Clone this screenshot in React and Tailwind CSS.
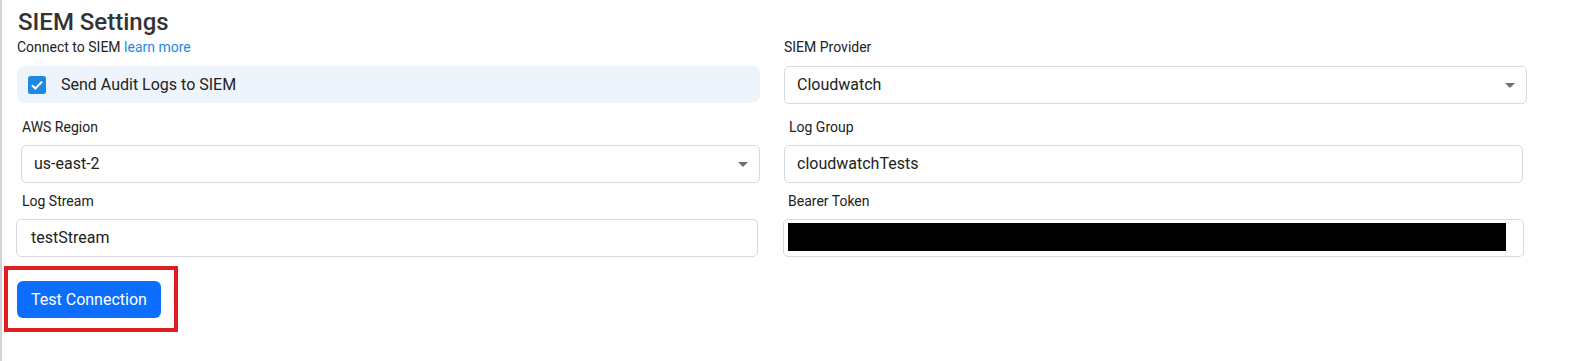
import { useState } from "react";

const FIELD_LABEL = "text-[14px] leading-5 text-[#222]";
const BOX = "h-[38px] rounded-[5px] border border-[#d6d9df] bg-white flex items-center text-[16px] text-[#222]";

function SelectBox({ value, className = "" }) {
    return (
        <div className={`${BOX} justify-between pl-3 pr-[11px] ${className}`}>
            <span>{value}</span>
            <span className="w-0 h-0 border-l-[5px] border-r-[5px] border-t-[5px] border-l-transparent border-r-transparent border-t-[#707070]" />
        </div>
    );
}

function CheckIcon() {
    return (
        <svg width="18" height="18" viewBox="0 0 18 18" className="shrink-0">
            <rect x="0" y="0" width="18" height="18" rx="2.5" fill="#1e88e5" />
            <path d="M4 9.2 L7.4 12.5 L14 5.8" fill="none" stroke="#fff" strokeWidth="2" />
        </svg>
    );
}

export default function App() {
    const [checked] = useState(true);

    return (
        <div className="min-h-[361px] h-screen bg-white border-l-2 border-[#d3d3d3] font-['Roboto',sans-serif]">
            <div className="pl-[15px] pt-2">
                {/* Header */}
                <h1 className="text-[24px] leading-[28px] font-medium text-[#333] pl-px">SIEM Settings</h1>

                <div className="grid grid-cols-[743px_743px] gap-x-6 mt-px">
                    {/* Row 1 */}
                    <div>
                        <p className={`${FIELD_LABEL} mb-[9px]`}>
                            Connect to SIEM <a href="#" className="text-[#1e88e5]">learn more</a>
                        </p>
                        <div className="h-[37px] rounded-lg bg-[#edf4fc] flex items-center gap-[15px] pl-[11px]">
                            {checked && <CheckIcon />}
                            <span className="text-[16px] text-[#222]">Send Audit Logs to SIEM</span>
                        </div>
                    </div>
                    <div>
                        <p className={`${FIELD_LABEL} mb-[9px]`}>SIEM Provider</p>
                        <SelectBox value="Cloudwatch" className="h-[37px]" />
                    </div>

                    {/* Row 2 */}
                    <div className="mt-[13px] ml-1">
                        <p className={`${FIELD_LABEL} mb-2 pl-px`}>AWS Region</p>
                        <SelectBox value="us-east-2" />
                    </div>
                    <div className="mt-[13px]">
                        <p className={`${FIELD_LABEL} mb-2 pl-[5px]`}>Log Group</p>
                        <div className={`${BOX} pl-3 w-[739px]`}>cloudwatchTests</div>
                    </div>

                    {/* Row 3 */}
                    <div className="mt-2 -ml-px">
                        <p className={`${FIELD_LABEL} mb-2 pl-[6px]`}>Log Stream</p>
                        <div className={`${BOX} pl-[14px] w-[742px]`}>testStream</div>
                    </div>
                    <div className="mt-2 -ml-px">
                        <p className={`${FIELD_LABEL} mb-2 pl-[5px]`}>Bearer Token</p>
                        <div className={`${BOX} w-[741px] pl-1 pr-[17px] items-start pt-[3px]`}>
                            <div className="h-[28px] w-full bg-black" />
                        </div>
                    </div>
                </div>

                {/* Test connection (highlighted) */}
                <div className="mt-[9px] -ml-[13px] w-[174px] border-4 border-[#e11d24] pl-[9px] pt-[11px] pb-[10px]">
                    <button className="h-[37px] px-[14px] rounded-[6px] bg-[#0d6efd] text-white text-[16px] leading-none">
                        Test Connection
                    </button>
                </div>
            </div>
        </div>
    );
}
